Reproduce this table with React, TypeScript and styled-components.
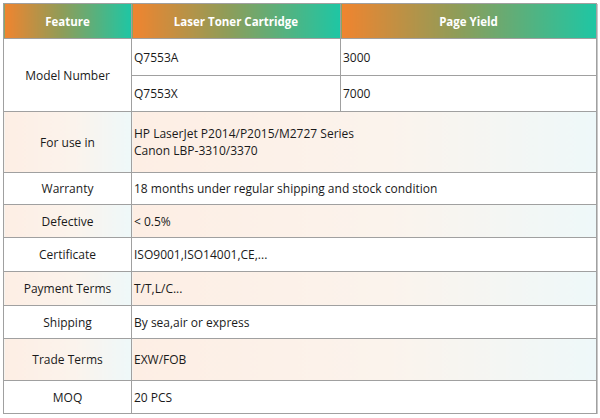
import React from "react";
import styled, { createGlobalStyle } from "styled-components";

const Global = createGlobalStyle`
  html, body { margin: 0; padding: 0; background: #ffffff; }
  body { font-family: "Open Sans", "Noto Sans", sans-serif; }
`;

const Page = styled.div`
  padding: 3px 4px 0 3px;
`;

const Table = styled.table`
  width: 593px;
  border-collapse: collapse;
  table-layout: fixed;
  border: 1px solid #a0a0a0;
  box-shadow: 1px 1px 0 #c8c8c8;
  font-size: 12px;
  color: #1a1a1a;
`;

const HeadCell = styled.th`
  height: 34px;
  padding: 0;
  border: 1px solid #a0a0a0;
  background: linear-gradient(to right, #f0842f 0%, #8f9c58 45%, #1ec6a4 100%);
  color: #ffffff;
  font-weight: 700;
  font-size: 11.5px;
  text-align: center;
  vertical-align: middle;
`;

const Cell = styled.td<{ $shade?: boolean; $center?: boolean; $h?: number }>`
  height: ${(p) => (p.$h ? `${p.$h}px` : "auto")};
  padding: 0 2px;
  border: 1px solid #a0a0a0;
  background: ${(p) =>
    p.$shade ? "linear-gradient(to right, #fdeee4 0%, #fbf3ec 55%, #eef8f9 100%)" : "#ffffff"};
  text-align: ${(p) => (p.$center ? "center" : "left")};
  vertical-align: middle;
  line-height: 17px;
  font-size: 12px;
`;

type Row = { label: string; value: React.ReactNode; h: number };

const rows: Row[] = [
  {
    label: "For use in",
    value: (
      <>
        HP LaserJet P2014/P2015/M2727 Series
        <br />
        Canon LBP-3310/3370
      </>
    ),
    h: 60,
  },
  { label: "Warranty", value: "18 months under regular shipping and stock condition", h: 31 },
  { label: "Defective", value: "< 0.5%", h: 32 },
  { label: "Certificate", value: "ISO9001,ISO14001,CE,...", h: 33 },
  { label: "Payment Terms", value: "T/T,L/C...", h: 33 },
  { label: "Shipping", value: "By sea,air or express", h: 32 },
  { label: "Trade Terms", value: "EXW/FOB", h: 41 },
  { label: "MOQ", value: "20 PCS", h: 32 },
];

export default function App() {
  return (
    <Page>
      <Global />
      <Table>
        <colgroup>
          <col style={{ width: 128 }} />
          <col style={{ width: 209 }} />
          <col style={{ width: 256 }} />
        </colgroup>
        <thead>
          <tr>
            <HeadCell>Feature</HeadCell>
            <HeadCell>Laser Toner Cartridge</HeadCell>
            <HeadCell>Page Yield</HeadCell>
          </tr>
        </thead>
        <tbody>
          <tr>
            <Cell $center rowSpan={2}>Model Number</Cell>
            <Cell $h={36}>Q7553A</Cell>
            <Cell $h={36}>3000</Cell>
          </tr>
          <tr>
            <Cell $h={35}>Q7553X</Cell>
            <Cell $h={35}>7000</Cell>
          </tr>
          {rows.map((r, i) => {
            const shade = i % 2 === 0;
            return (
              <tr key={r.label}>
                <Cell $center $shade={shade} $h={r.h}>
                  {r.label}
                </Cell>
                <Cell $shade={shade} colSpan={2} $h={r.h}>
                  {r.value}
                </Cell>
              </tr>
            );
          })}
        </tbody>
      </Table>
    </Page>
  );
}
